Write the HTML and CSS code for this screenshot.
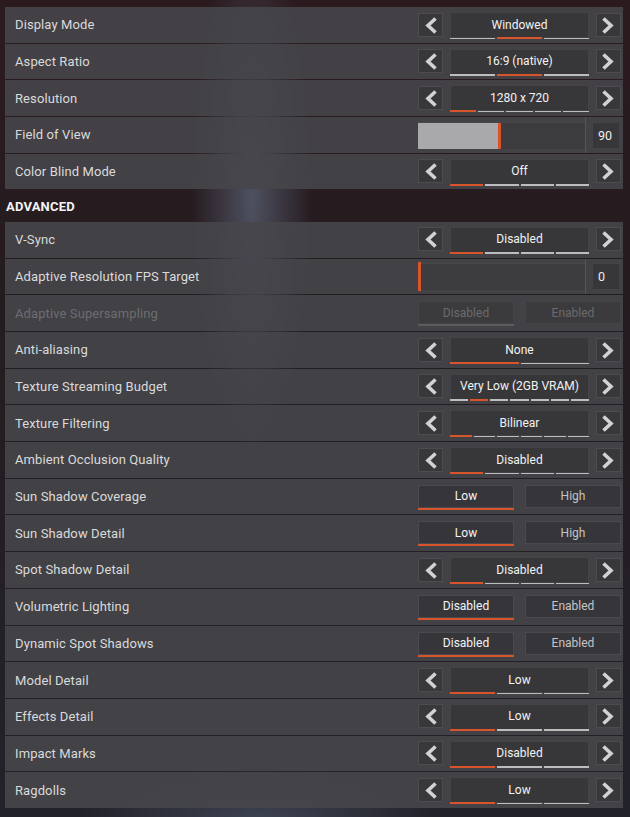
FILE: index.html
```html
<!DOCTYPE html>
<html lang="en">
<head>
<meta charset="utf-8">
<title>Video Settings</title>
<link rel="stylesheet" href="styles.css">
</head>
<body>
<svg width="0" height="0" class="defs">
  <defs>
    <symbol id="chev-l" viewBox="0 0 25 24"><polyline points="17.5,5.5 10,12.5 17.5,19.5"/></symbol>
    <symbol id="chev-r" viewBox="0 0 25 24"><polyline points="7.5,5.5 15,12.5 7.5,19.5"/></symbol>
  </defs>
</svg>
<div class="panel">
  <div class="row"><span class="label">Display Mode</span>
    <div class="cycler">
      <div class="arrow"><svg><use href="#chev-l"/></svg></div>
      <div class="value"><div class="value-box">Windowed</div><div class="segs"><i></i><i class="on"></i><i></i></div></div>
      <div class="arrow"><svg><use href="#chev-r"/></svg></div>
    </div>
  </div>
  <div class="row"><span class="label">Aspect Ratio</span>
    <div class="cycler">
      <div class="arrow"><svg><use href="#chev-l"/></svg></div>
      <div class="value"><div class="value-box">16:9 (native)</div><div class="segs"><i></i><i class="on"></i><i></i></div></div>
      <div class="arrow"><svg><use href="#chev-r"/></svg></div>
    </div>
  </div>
  <div class="row"><span class="label">Resolution</span>
    <div class="cycler">
      <div class="arrow"><svg><use href="#chev-l"/></svg></div>
      <div class="value"><div class="value-box">1280 x 720</div><div class="segs"><i class="on"></i><i></i><i></i><i></i><i></i></div></div>
      <div class="arrow"><svg><use href="#chev-r"/></svg></div>
    </div>
  </div>
  <div class="row"><span class="label">Field of View</span>
    <div class="slider">
      <div class="track"><div class="fill" style="width:80px"></div></div>
      <div class="sep"></div>
      <div class="num">90</div>
    </div>
  </div>
  <div class="row"><span class="label">Color Blind Mode</span>
    <div class="cycler">
      <div class="arrow"><svg><use href="#chev-l"/></svg></div>
      <div class="value"><div class="value-box">Off</div><div class="segs"><i class="on"></i><i></i><i></i><i></i></div></div>
      <div class="arrow"><svg><use href="#chev-r"/></svg></div>
    </div>
  </div>

  <div class="section-title">ADVANCED</div>

  <div class="row"><span class="label">V-Sync</span>
    <div class="cycler">
      <div class="arrow"><svg><use href="#chev-l"/></svg></div>
      <div class="value"><div class="value-box">Disabled</div><div class="segs"><i class="on"></i><i></i><i></i><i></i></div></div>
      <div class="arrow"><svg><use href="#chev-r"/></svg></div>
    </div>
  </div>
  <div class="row"><span class="label">Adaptive Resolution FPS Target</span>
    <div class="slider">
      <div class="track"><div class="fill zero" style="width:0px"></div></div>
      <div class="sep"></div>
      <div class="num">0</div>
    </div>
  </div>
  <div class="row"><span class="label dim">Adaptive Supersampling</span>
    <div class="toggle disabled">
      <div class="tbtn sel">Disabled</div>
      <div class="tbtn">Enabled</div>
    </div>
  </div>
  <div class="row"><span class="label">Anti-aliasing</span>
    <div class="cycler">
      <div class="arrow"><svg><use href="#chev-l"/></svg></div>
      <div class="value"><div class="value-box">None</div><div class="segs"><i class="on"></i><i></i></div></div>
      <div class="arrow"><svg><use href="#chev-r"/></svg></div>
    </div>
  </div>
  <div class="row"><span class="label">Texture Streaming Budget</span>
    <div class="cycler">
      <div class="arrow"><svg><use href="#chev-l"/></svg></div>
      <div class="value"><div class="value-box">Very Low (2GB VRAM)</div><div class="segs"><i></i><i class="on"></i><i></i><i></i><i></i><i></i><i></i></div></div>
      <div class="arrow"><svg><use href="#chev-r"/></svg></div>
    </div>
  </div>
  <div class="row"><span class="label">Texture Filtering</span>
    <div class="cycler">
      <div class="arrow"><svg><use href="#chev-l"/></svg></div>
      <div class="value"><div class="value-box">Bilinear</div><div class="segs"><i class="on"></i><i></i><i></i><i></i><i></i><i></i></div></div>
      <div class="arrow"><svg><use href="#chev-r"/></svg></div>
    </div>
  </div>
  <div class="row"><span class="label">Ambient Occlusion Quality</span>
    <div class="cycler">
      <div class="arrow"><svg><use href="#chev-l"/></svg></div>
      <div class="value"><div class="value-box">Disabled</div><div class="segs"><i class="on"></i><i></i><i></i><i></i></div></div>
      <div class="arrow"><svg><use href="#chev-r"/></svg></div>
    </div>
  </div>
  <div class="row"><span class="label">Sun Shadow Coverage</span>
    <div class="toggle">
      <div class="tbtn sel">Low</div>
      <div class="tbtn">High</div>
    </div>
  </div>
  <div class="row"><span class="label">Sun Shadow Detail</span>
    <div class="toggle">
      <div class="tbtn sel">Low</div>
      <div class="tbtn">High</div>
    </div>
  </div>
  <div class="row"><span class="label">Spot Shadow Detail</span>
    <div class="cycler">
      <div class="arrow"><svg><use href="#chev-l"/></svg></div>
      <div class="value"><div class="value-box">Disabled</div><div class="segs"><i class="on"></i><i></i><i></i><i></i></div></div>
      <div class="arrow"><svg><use href="#chev-r"/></svg></div>
    </div>
  </div>
  <div class="row"><span class="label">Volumetric Lighting</span>
    <div class="toggle">
      <div class="tbtn sel">Disabled</div>
      <div class="tbtn">Enabled</div>
    </div>
  </div>
  <div class="row"><span class="label">Dynamic Spot Shadows</span>
    <div class="toggle">
      <div class="tbtn sel">Disabled</div>
      <div class="tbtn">Enabled</div>
    </div>
  </div>
  <div class="row"><span class="label">Model Detail</span>
    <div class="cycler">
      <div class="arrow"><svg><use href="#chev-l"/></svg></div>
      <div class="value"><div class="value-box">Low</div><div class="segs"><i class="on"></i><i></i><i></i></div></div>
      <div class="arrow"><svg><use href="#chev-r"/></svg></div>
    </div>
  </div>
  <div class="row"><span class="label">Effects Detail</span>
    <div class="cycler">
      <div class="arrow"><svg><use href="#chev-l"/></svg></div>
      <div class="value"><div class="value-box">Low</div><div class="segs"><i class="on"></i><i></i><i></i></div></div>
      <div class="arrow"><svg><use href="#chev-r"/></svg></div>
    </div>
  </div>
  <div class="row"><span class="label">Impact Marks</span>
    <div class="cycler">
      <div class="arrow"><svg><use href="#chev-l"/></svg></div>
      <div class="value"><div class="value-box">Disabled</div><div class="segs"><i class="on"></i><i></i><i></i></div></div>
      <div class="arrow"><svg><use href="#chev-r"/></svg></div>
    </div>
  </div>
  <div class="row"><span class="label">Ragdolls</span>
    <div class="cycler">
      <div class="arrow"><svg><use href="#chev-l"/></svg></div>
      <div class="value"><div class="value-box">Low</div><div class="segs"><i class="on"></i><i></i><i></i></div></div>
      <div class="arrow"><svg><use href="#chev-r"/></svg></div>
    </div>
  </div>
</div>
</body>
</html>
```

FILE: styles.css
```css
html, body {
  margin: 0;
  padding: 0;
}

body {
  width: 630px;
  height: 817px;
  overflow: hidden;
  font-family: "Roboto", "Liberation Sans", sans-serif;
  background:
    radial-gradient(ellipse 60px 260px at 252px 200px, rgba(110, 125, 150, 0.55), rgba(110, 125, 150, 0) 100%),
    radial-gradient(ellipse 180px 60px at 260px 820px, rgba(90, 100, 120, 0.5), rgba(90, 100, 120, 0) 100%),
    linear-gradient(180deg, #2b1b1f 0%, #241c20 40%, #22222a 100%);
}

.defs {
  position: absolute;
}

.panel {
  display: flex;
  flex-direction: column;
  gap: 1px;
  padding: 7px 7px 0 5px;
}

.row {
  height: 35.7px;
  display: flex;
  align-items: stretch;
  justify-content: space-between;
  padding: 0 2px 0 10px;
  background: rgba(70, 70, 74, 0.9);
}

.label {
  align-self: center;
  font-size: 13px;
  color: #dadada;
  letter-spacing: 0.1px;
}

.label.dim {
  color: #6d6d70;
}

.section-title {
  height: 30.5px;
  display: flex;
  align-items: center;
  padding-left: 1px;
  margin-left: 0;
  font-size: 13px;
  font-weight: 700;
  color: #f4f4f4;
  letter-spacing: 0.2px;
  padding-top: 1px;
  box-sizing: border-box;
}

/* cycler */
.cycler {
  width: 203px;
  display: flex;
  gap: 7px;
  align-items: flex-start;
  padding-top: 5px;
}

.arrow {
  width: 25px;
  height: 24px;
  box-sizing: border-box;
  margin-top: 0.5px;
  background: #38383b;
  border: 1px solid #4c4c50;
  display: flex;
  align-items: center;
  justify-content: center;
}

.arrow svg {
  width: 25px;
  height: 24px;
  flex: none;
  fill: none;
  stroke: #d2d2d4;
  stroke-width: 3.6;
  stroke-linejoin: miter;
  stroke-linecap: butt;
}

.value {
  flex: 1;
  display: flex;
  flex-direction: column;
}

.value-box {
  height: 25px;
  box-sizing: border-box;
  background: #37373a;
  border: 1px solid #444448;
  border-bottom: none;
  display: flex;
  align-items: center;
  justify-content: center;
  font-size: 12px;
  color: #f2f2f2;
  padding-bottom: 1px;
}

.segs {
  display: flex;
  gap: 2px;
  height: 2px;
  align-items: flex-end;
}

.segs i {
  flex: 1;
  height: 1.5px;
  background: #bdbdbf;
}

.segs i.on {
  height: 2px;
  background: #d8552c;
}

/* toggle */
.toggle {
  width: 203px;
  display: flex;
  gap: 11px;
  align-items: flex-start;
  padding-top: 6px;
}

.tbtn {
  flex: 1;
  height: 23px;
  box-sizing: border-box;
  background: #36363a;
  border: 1px solid #4a4a4e;
  display: flex;
  align-items: center;
  justify-content: center;
  font-size: 12px;
  color: #c4c4c6;
}

.tbtn.sel {
  color: #f4f4f4;
  box-shadow: 0 2px 0 #d8552c;
}

.toggle.disabled .tbtn {
  color: #6a6a6d;
  background: #3b3b3e;
  border-color: #444447;
}

.toggle.disabled .tbtn.sel {
  box-shadow: 0 2px 0 #5c5c60;
}

/* slider */
.slider {
  width: 203px;
  display: flex;
  align-items: stretch;
}

.track {
  width: 167px;
  margin: 4.5px 0 4px;
  box-sizing: border-box;
  background: #3c3c3f;
  border-top: 1px solid #48484c;
  display: flex;
}

.fill {
  box-sizing: content-box;
  background: #a9a9ab;
  border-right: 3px solid #d8552c;
}

.fill.zero {
  margin: -2px 0 -1px;
}

.sep {
  width: 1px;
  background: #56565a;
}

.num {
  width: 28px;
  margin: 4.5px 1px 4px 6px;
  box-sizing: border-box;
  background: #37373a;
  border: 1px solid #434347;
  display: flex;
  align-items: center;
  padding-left: 5px;
  font-size: 12.5px;
  color: #eeeeee;
}
```
